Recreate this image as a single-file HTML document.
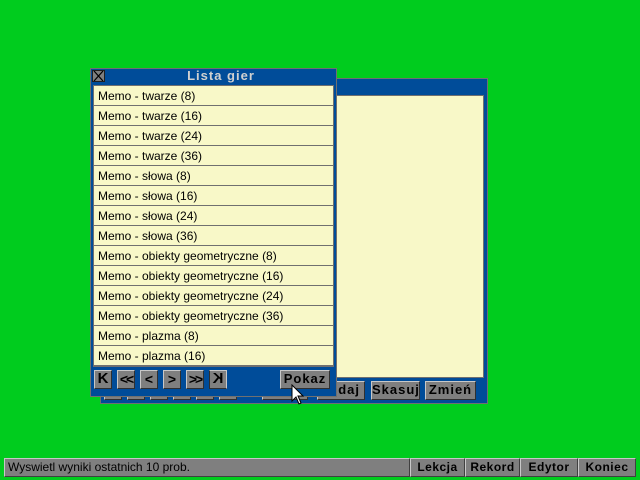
<!DOCTYPE html>
<html><head><meta charset="utf-8"><style>
*{margin:0;padding:0;box-sizing:border-box}
body{width:640px;height:480px;background:#00cc1e;position:relative;overflow:hidden;font-family:"Liberation Sans",sans-serif}
.a{position:absolute}
.btn{position:absolute;background:#7f7f7f;border:1px solid;border-color:#c8c8c8 #303030 #303030 #c8c8c8;color:#000;font-weight:bold;font-size:13px;text-align:center;line-height:16px;letter-spacing:1px}
.item{position:absolute;left:94px;width:239px;height:19px;background:#f8f8c8;font-size:12px;line-height:20px;padding-left:4px;color:#000}
.sb{position:absolute;top:458px;height:19px;background:#7f7f7f;border:1px solid;border-color:#c8c8c8 #404040 #404040 #c8c8c8;font-size:12px;line-height:17px}
.sbb{font-weight:bold;text-align:center;letter-spacing:0.5px}
</style></head><body>
<!-- back window -->
<div class="a" style="left:100px;top:78px;width:388px;height:326px;background:#004c99;border:1px solid #707070"></div>
<div class="a" style="left:330px;top:95px;width:154px;height:283px;background:#f8f8c8;border:1px solid #707070"></div>
<div class="btn" style="left:104px;top:381px;width:18px;height:19px"></div>
<div class="btn" style="left:127px;top:381px;width:18px;height:19px"></div>
<div class="btn" style="left:150px;top:381px;width:18px;height:19px"></div>
<div class="btn" style="left:173px;top:381px;width:18px;height:19px"></div>
<div class="btn" style="left:196px;top:381px;width:18px;height:19px"></div>
<div class="btn" style="left:219px;top:381px;width:18px;height:19px"></div>
<div class="btn" style="left:262px;top:381px;width:46px;height:19px"></div>
<div class="btn" style="left:317px;top:381px;width:48px;height:19px;text-align:right;padding-right:4px">daj</div>
<div class="btn" style="left:371px;top:381px;width:49px;height:19px">Skasuj</div>
<div class="btn" style="left:425px;top:381px;width:51px;height:19px">Zmień</div>
<!-- front window -->
<div class="a" style="left:90px;top:68px;width:247px;height:329px;background:#004c99;border:1px solid #707070"></div>
<div class="a" style="left:92px;top:70px;width:13px;height:12px;background:#7f7f7f;border:1px solid #202020"><svg width="11" height="10" style="display:block"><path d="M1 0L10 10M10 0L1 10" stroke="#000" stroke-width="1.2"/></svg></div>
<div class="a" style="left:105px;top:68px;width:232px;height:16px;color:#d0d0d0;font-weight:bold;font-size:13px;text-align:center;line-height:16px;letter-spacing:1px">Lista gier</div>
<div class="a" style="left:93px;top:85px;width:241px;height:282px;background:#707070"></div>
<div class="item" style="top:86px">Memo - twarze (8)</div>
<div class="item" style="top:106px">Memo - twarze (16)</div>
<div class="item" style="top:126px">Memo - twarze (24)</div>
<div class="item" style="top:146px">Memo - twarze (36)</div>
<div class="item" style="top:166px">Memo - słowa (8)</div>
<div class="item" style="top:186px">Memo - słowa (16)</div>
<div class="item" style="top:206px">Memo - słowa (24)</div>
<div class="item" style="top:226px">Memo - słowa (36)</div>
<div class="item" style="top:246px">Memo - obiekty geometryczne (8)</div>
<div class="item" style="top:266px">Memo - obiekty geometryczne (16)</div>
<div class="item" style="top:286px">Memo - obiekty geometryczne (24)</div>
<div class="item" style="top:306px">Memo - obiekty geometryczne (36)</div>
<div class="item" style="top:326px">Memo - plazma (8)</div>
<div class="item" style="top:346px">Memo - plazma (16)</div>
<div class="btn" style="left:94px;top:370px;width:18px;height:19px;font-size:15px;letter-spacing:0">K</div>
<div class="btn" style="left:117px;top:370px;width:18px;height:19px;font-size:14px;letter-spacing:-2px">&lt;&lt;</div>
<div class="btn" style="left:140px;top:370px;width:18px;height:19px;font-size:14px;letter-spacing:0">&lt;</div>
<div class="btn" style="left:163px;top:370px;width:18px;height:19px;font-size:14px;letter-spacing:0">&gt;</div>
<div class="btn" style="left:186px;top:370px;width:18px;height:19px;font-size:14px;letter-spacing:-2px">&gt;&gt;</div>
<div class="btn" style="left:209px;top:370px;width:18px;height:19px;font-size:15px;letter-spacing:0;transform:scaleX(-1)">K</div>
<div class="btn" style="left:280px;top:370px;width:50px;height:19px">Pokaz</div>
<!-- cursor -->
<svg class="a" style="left:291px;top:384px" width="14" height="22"><path d="M1 1L1 17L5 13L8 20L10 19L7 12L12 12Z" fill="#fff" stroke="#000" stroke-width="1"/></svg>
<!-- status bar -->
<div class="sb" style="left:4px;width:406px;padding-left:3px">Wyswietl wyniki ostatnich 10 prob.</div>
<div class="sb sbb" style="left:410px;width:55px">Lekcja</div>
<div class="sb sbb" style="left:465px;width:55px">Rekord</div>
<div class="sb sbb" style="left:520px;width:58px">Edytor</div>
<div class="sb sbb" style="left:578px;width:58px">Koniec</div>
</body></html>
